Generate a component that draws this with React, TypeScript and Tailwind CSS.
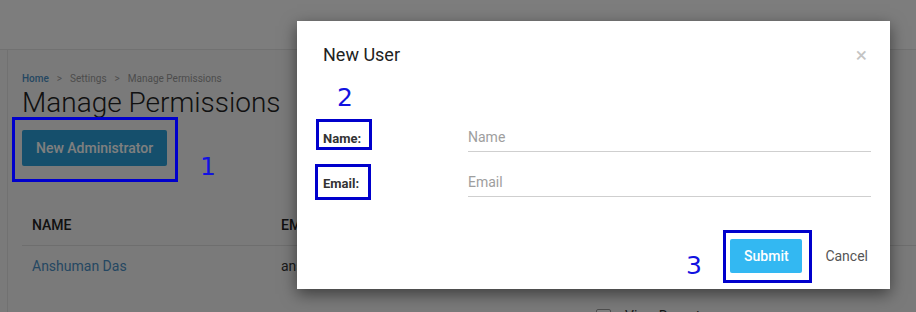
import React from "react";

function Check() {
  return (
    <span className="flex h-[15px] w-[15px] items-center justify-center rounded-[2px] border border-[#9a9a9a] bg-white">
      <svg viewBox="0 0 12 12" className="h-[11px] w-[11px]" fill="none" stroke="#2a6db0" strokeWidth="1.8">
        <path d="M2 6.5l2.5 2.5L10 3" />
      </svg>
    </span>
  );
}

function Field({ label, placeholder }: { label: string; placeholder: string }) {
  return (
    <div className="flex h-[30px] items-center">
      <label className="w-[145px] pt-[4px] text-[13px] font-bold text-[#333]">{label}</label>
      <input
        placeholder={placeholder}
        className="h-[30px] flex-1 border-b border-[#cfcfcf] bg-transparent text-[14px] text-[#333] outline-none placeholder:text-[#9e9e9e]"
      />
    </div>
  );
}

export default function App() {
  return (
    <div className="relative h-[312px] w-[916px] overflow-hidden bg-[#f5f5f5] font-['Roboto',sans-serif]">
      {/* page underneath */}
      <header className="h-[50px] border-b border-[#e2e2e2] bg-[#fafafa]" />
      <div className="flex">
        <aside className="h-[262px] w-[8px] border-r border-[#e2e2e2]" />
        <main className="flex-1 pl-[14px]">
          <nav className="flex items-center gap-[8px] pt-[21px] text-[10px] text-[#999]">
            <span className="font-medium text-[#4a8fc4]">Home</span>
            <span>&gt;</span>
            <span>Settings</span>
            <span>&gt;</span>
            <span>Manage Permissions</span>
          </nav>
          <h1 className="mt-[1px] text-[28px] font-light leading-[32px] text-[#222]">Manage Permissions</h1>
          <button className="mt-[11px] h-[36px] rounded-[2px] bg-[#2a9fd8] px-[14px] text-[14px] font-medium text-white">
            New Administrator
          </button>
          <div className="mt-[33px]">
            <div className="flex h-[47px] items-center border-b border-[#dcdcdc] pt-[6px] text-[14px] font-medium uppercase text-[#222]">
              <div className="w-[259px] pl-[10px]">Name</div>
              <div className="w-[315px]">Email</div>
              <div>Permissions</div>
            </div>
            <div className="flex text-[14px]">
              <div className="flex h-[40px] w-[259px] items-center pl-[10px] text-[#4a8fc4]">Anshuman Das</div>
              <div className="flex h-[40px] w-[315px] items-center text-[#333]">anshuman@example.com</div>
              <div className="flex flex-col gap-[10px]">
                <div className="flex h-[40px] items-center gap-[14px] text-[#333]">
                  <Check />
                  <span>Manage Users</span>
                </div>
                <div className="flex h-[40px] items-center gap-[14px] text-[#333]">
                  <Check />
                  <span>View Reports</span>
                </div>
              </div>
            </div>
          </div>
        </main>
      </div>

      {/* backdrop */}
      <div className="absolute inset-0 bg-black/50" />

      {/* modal */}
      <div className="absolute left-[297px] top-[21px] flex h-[268px] w-[593px] flex-col bg-white shadow-[0_5px_15px_rgba(0,0,0,0.5)]">
        <div className="flex items-center justify-between pl-[26px] pr-[23px] pt-[23px]">
          <h2 className="text-[18px] leading-[22px] text-[#222]">New User</h2>
          <span className="text-[21px] leading-[22px] text-[#c4c4c4]">×</span>
        </div>
        <div className="mt-[56px] flex flex-col gap-[15px] pl-[26px] pr-[19px]">
          <Field label="Name:" placeholder="Name" />
          <Field label="Email:" placeholder="Email" />
        </div>
        <div className="mt-auto flex items-center justify-end gap-[23px] pb-[16px] pr-[22px]">
          <button className="h-[34px] w-[72px] rounded-[2px] bg-[#33b8f2] text-[14px] font-medium text-white">
            Submit
          </button>
          <button className="text-[14px] text-[#555]">Cancel</button>
        </div>
      </div>

      {/* annotations */}
      <div className="pointer-events-none absolute left-[12px] top-[117px] h-[65px] w-[166px] border-[3px] border-[#0000cc]" />
      <div className="pointer-events-none absolute left-[316px] top-[119px] h-[31px] w-[56px] border-[3px] border-[#0000cc]" />
      <div className="pointer-events-none absolute left-[315px] top-[164px] h-[36px] w-[56px] border-[3px] border-[#0000cc]" />
      <div className="pointer-events-none absolute left-[723px] top-[230px] h-[53px] w-[89px] border-[3px] border-[#0000cc]" />
      <span className="absolute left-[200px] top-[152px] font-['DejaVu_Sans',sans-serif] text-[25px] leading-[30px] text-[#1212e0]">1</span>
      <span className="absolute left-[337px] top-[83px] font-['DejaVu_Sans',sans-serif] text-[25px] leading-[30px] text-[#1212e0]">2</span>
      <span className="absolute left-[686px] top-[251px] font-['DejaVu_Sans',sans-serif] text-[25px] leading-[30px] text-[#1212e0]">3</span>
    </div>
  );
}
